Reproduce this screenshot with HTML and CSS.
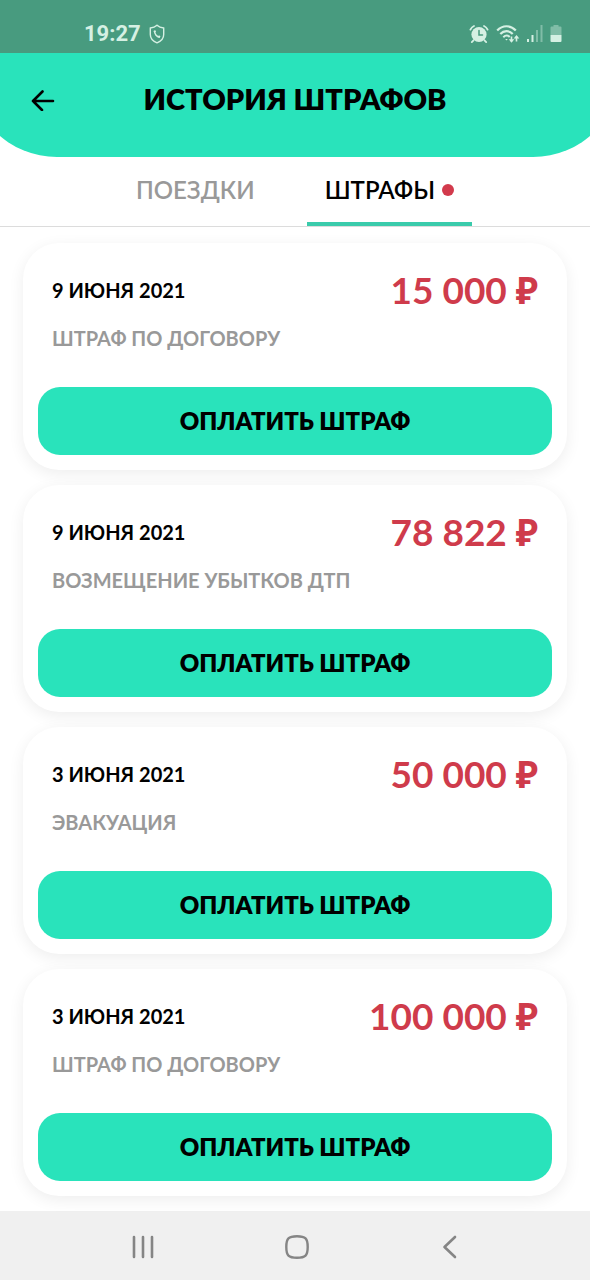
FILE: index.html
```html
<!DOCTYPE html>
<html lang="ru">
<head>
<meta charset="utf-8">
<meta name="viewport" content="width=device-width, initial-scale=1">
<title>История штрафов</title>
<link rel="stylesheet" href="styles.css">
</head>
<body>
<div class="status">
  <div class="status-group">
    <span class="clock">19:27</span>
    <svg class="shield" width="16" height="20" viewBox="0 0 16 20" fill="none" stroke="currentColor"><path d="M8 1.2C10 3 12.300 3.700 14.700 4v6.500c0 4-2.800 6.800-6.700 8.300-3.900-1.500-6.700-4.300-6.700-8.300V4C3.700 3.700 6 3 8 1.200z" stroke-width="1.400"/><path d="M5.600 6.800c-.3 3.200 2 6 5 6.400" stroke-width="1.400"/><path d="M5.400 6.600l.7 1.700M9.400 12.200l1.600.9" stroke-width="2"/></svg>
  </div>
  <div class="status-group status-icons">
    <svg width="20" height="20" viewBox="0 0 20 20" fill="none" stroke="currentColor" stroke-linecap="round"><circle cx="10" cy="10.500" r="7.600" fill="currentColor" stroke="none"/><path d="M1.400 5.600A7 7 0 0 1 5 2M18.600 5.600A7 7 0 0 0 15 2M4.500 16.300l-1.700 1.800M15.500 16.300l1.700 1.800" stroke-width="1.800"/><path d="M10 6.500v4.500h3.500" stroke="#489b7f" stroke-width="1.500"/></svg>
    <svg width="24" height="20" viewBox="0 0 24 20" fill="none" stroke="currentColor"><path d="M1.200 6.500C6.500.8 14.500.8 19.800 6.500M4.300 10c3.600-3.800 8.800-3.800 12.400 0" stroke-width="2.200"/><path d="M7.300 13.200c2-2 4.600-2 6.400-.2" stroke-width="2"/><path d="M9.200 15l1.300 1.500 1.300-1.500z" fill="currentColor" stroke="none"/><path d="M15.500 12.500v5M20.500 17.500v-5" stroke-width="1.600"/><path d="M12.700 15.300h5.600l-2.800 3.500zM17.700 14.500h5.600l-2.800-3.500z" fill="currentColor" stroke="none"/></svg>
    <svg width="16" height="20" viewBox="0 0 16 20" fill="currentColor"><rect x="0" y="15" width="2" height="3"/><rect x="4.500" y="11" width="2" height="7"/><g opacity=".4"><rect x="9" y="6" width="2" height="12"/><rect x="13.500" y="1" width="2" height="17"/></g></svg>
    <svg width="12" height="20" viewBox="0 0 12 20" fill="currentColor"><path opacity=".4" d="M3.500 1h5v1.500h2q1 0 1 1V11H.500V3.500q0-1 1-1h2z"/><path d="M.500 11h11v6q0 1-1 1h-9q-1 0-1-1z"/></svg>
  </div>
</div>

<header class="header">
  <button class="back" type="button" aria-label="Назад">
    <svg width="24" height="24" viewBox="0 0 24 24" fill="none" stroke="currentColor" stroke-width="2.600" stroke-linecap="round" stroke-linejoin="round"><path d="M22 14H2M11.500 4.500L2 14l9 9"/></svg>
  </button>
  <h1 class="title">ИСТОРИЯ ШТРАФОВ</h1>
</header>

<nav class="tabs">
  <a class="tab" href="#trips">ПОЕЗДКИ</a>
  <a class="tab tab-active" href="#fines" aria-current="page">ШТРАФЫ<span class="dot"></span></a>
</nav>

<main class="list">
  <article class="card">
    <div class="info">
      <div class="row"><span class="date">9 ИЮНЯ 2021</span><span class="amount">15 000 ₽</span></div>
      <p class="reason">ШТРАФ ПО ДОГОВОРУ</p>
    </div>
    <button class="pay" type="button">ОПЛАТИТЬ ШТРАФ</button>
  </article>
  <article class="card">
    <div class="info">
      <div class="row"><span class="date">9 ИЮНЯ 2021</span><span class="amount">78 822 ₽</span></div>
      <p class="reason">ВОЗМЕЩЕНИЕ УБЫТКОВ ДТП</p>
    </div>
    <button class="pay" type="button">ОПЛАТИТЬ ШТРАФ</button>
  </article>
  <article class="card">
    <div class="info">
      <div class="row"><span class="date">3 ИЮНЯ 2021</span><span class="amount">50 000 ₽</span></div>
      <p class="reason">ЭВАКУАЦИЯ</p>
    </div>
    <button class="pay" type="button">ОПЛАТИТЬ ШТРАФ</button>
  </article>
  <article class="card">
    <div class="info">
      <div class="row"><span class="date">3 ИЮНЯ 2021</span><span class="amount">100 000 ₽</span></div>
      <p class="reason">ШТРАФ ПО ДОГОВОРУ</p>
    </div>
    <button class="pay" type="button">ОПЛАТИТЬ ШТРАФ</button>
  </article>
</main>

<footer class="system-nav">
  <button type="button" aria-label="Недавние"><svg width="24" height="24" viewBox="0 0 24 24" fill="none" stroke="currentColor" stroke-width="2.600" stroke-linecap="round"><path d="M3 2v20M12 2v20M21 2v20"/></svg></button>
  <button type="button" aria-label="Домой"><svg width="24" height="24" viewBox="0 0 24 24" fill="none" stroke="currentColor" stroke-width="2.400"><path d="M12 1.300c8.500 0 10.700 2.200 10.700 10.700S20.500 22.700 12 22.700 1.300 20.500 1.300 12 3.500 1.300 12 1.300z"/></svg></button>
  <button type="button" aria-label="Назад"><svg width="24" height="24" viewBox="0 0 24 24" fill="none" stroke="currentColor" stroke-width="2.600" stroke-linecap="round" stroke-linejoin="round"><path d="M17 2L6.500 12 17 22"/></svg></button>
</footer>
</body>
</html>
```

FILE: styles.css
```css
* {
  box-sizing: border-box;
}

body {
  margin: 0;
  background: #fff;
  color: #000;
  font-family: Lato, "Noto Sans", sans-serif;
}

button {
  border: 0;
  padding: 0;
  background: none;
  color: inherit;
  font: inherit;
}

svg {
  display: block;
}

.status {
  display: flex;
  align-items: center;
  justify-content: space-between;
  height: 53px;
  padding: 15px 28px 0 84px;
  background: #489b7f;
  color: #d5f0e3;
}

.status-group {
  display: flex;
  align-items: center;
  gap: 8px;
}

.status-icons {
  gap: 7px;
}

.clock {
  font: 700 22px/24px Roboto, sans-serif;
}

/* The bottom curve starts outside the window on both sides. */
.header {
  display: grid;
  grid-template-columns: 24px 1fr 24px;
  align-items: center;
  padding: 27px 31px 39px;
  background: #29e3bb;
  clip-path: inset(0 -31px round 0 0 88px 88px);
}

.title {
  margin: 0;
  font-size: 29px;
  font-weight: 800;
  line-height: 38px;
  text-align: center;
}

.tabs {
  display: flex;
  justify-content: center;
  gap: 34px;
  border-bottom: 1px solid #dcdcdc;
}

.tab {
  display: flex;
  align-items: center;
  gap: 7px;
  padding: 16px 18px 15px;
  border-bottom: 4px solid transparent;
  color: #999;
  font-size: 24px;
  font-weight: 600;
  line-height: 34px;
  text-decoration: none;
}

.tab-active {
  border-bottom-color: #3acbab;
  border-radius: 3px 3px 0 0;
  color: #000;
}

.dot {
  width: 12px;
  height: 12px;
  border-radius: 50%;
  background: #d23a4c;
}

.list {
  display: grid;
  gap: 15px;
  padding: 16px 23px 15px;
}

.card {
  display: grid;
  gap: 35px;
  padding: 27px 15px 15px;
  border-radius: 36px;
  background: #fff;
  box-shadow: 0 4px 16px rgba(0, 0, 0, 0.07);
}

.info {
  padding: 0 14px;
}

.row {
  display: flex;
  align-items: center;
  justify-content: space-between;
}

.date {
  font-size: 20px;
  font-weight: 700;
  line-height: 40px;
}

.amount {
  color: #cf3b4b;
  font-size: 37px;
  font-weight: 700;
  line-height: 40px;
}

.reason {
  margin: 14px 0 0;
  color: #999;
  font-size: 20px;
  font-weight: 700;
  line-height: 28px;
}

.pay {
  height: 68px;
  padding-bottom: 2px;
  border-radius: 22px;
  background: #29e3bb;
  font-size: 24px;
  font-weight: 800;
}

.system-nav {
  display: flex;
  justify-content: space-between;
  padding: 24px 128px 21px 131px;
  background: #f0f0f0;
  color: #858585;
}
```
